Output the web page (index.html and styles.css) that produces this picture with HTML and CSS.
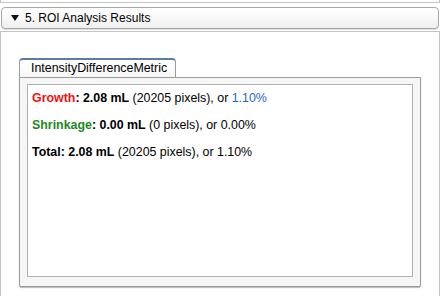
FILE: index.html
```html
<!DOCTYPE html>
<html lang="en">
<head>
    <meta charset="UTF-8">
    <title>ROI Analysis Results</title>
    <link rel="stylesheet" href="styles.css">
</head>
<body>
    <div class="prev-panel"></div>
    <div class="section-header">
        <span class="arrow"></span>
        <span class="section-title">5. ROI Analysis Results</span>
    </div>
    <div class="section-body">
        <div class="tabs">
            <div class="tab active">IntensityDifferenceMetric</div>
        </div>
        <div class="tab-pane">
            <div class="results">
                <p class="row"><span class="growth">Growth</span><b>: 2.08 mL</b> (20205 pixels), or <span class="pct">1.10%</span></p>
                <p class="row"><span class="shrink">Shrinkage</span><b>: 0.00 mL</b> (0 pixels), or 0.00%</p>
                <p class="row"><b>Total: 2.08 mL</b> (20205 pixels), or 1.10%</p>
            </div>
        </div>
    </div>
</body>
</html>
```
FILE: styles.css
```css
body {
    margin: 0;
    background: #fff;
    font-family: "Liberation Sans", Arial, sans-serif;
    font-size: 12.4px;
    color: #000;
    width: 440px;
    height: 296px;
    overflow: hidden;
}

.prev-panel {
    height: 2px;
    border: 1px solid #c4c4c4;
    border-top: none;
}

.section-header {
    margin: 4px 1px 0 1px;
    height: 20px;
    border: 1px solid #a8a8a8;
    border-radius: 4px;
    background: linear-gradient(#ffffff, #f0f0f0);
    display: flex;
    align-items: center;
    box-shadow: 0 1px 0 #ddd;
}

.arrow {
    width: 0;
    height: 0;
    border-left: 4px solid transparent;
    border-right: 4px solid transparent;
    border-top: 6px solid #111;
    margin-left: 9px;
    margin-right: 6px;
}

.section-title {
    font-size: 12px;
}

.section-body {
    margin-top: 2px;
    border: 1px solid #c4c4c4;
    border-bottom: none;
    padding: 26px 18px 0 18px;
    height: 238px;
}

.tabs {
    display: flex;
}

.tab {
    height: 17px;
    padding: 0 0 0 11px;
    border: 1px solid #9a9a9a;
    border-top: 2px solid #5a7da3;
    border-bottom: none;
    border-radius: 4px 4px 0 0;
    background: linear-gradient(#ffffff, #f7f7f7);
    line-height: 17px;
    width: 144px;
}

.tab-pane {
    height: 193px;
    border: 1px solid #9a9a9a;
    border-radius: 0 0 2px 2px;
    background: #f6f6f6;
    padding: 6px 7px 9px 7px;
    box-shadow: 0 1px 1px #bbb;
}

.results {
    height: 100%;
    background: #fff;
    border: 1px solid #b0b0b0;
    box-sizing: border-box;
    padding: 6px 4px;
}

.row {
    margin: 0 0 12px 0;
    line-height: 15px;
}

.growth { color: #f01010; font-weight: bold; }
.shrink { color: #1c8a1c; font-weight: bold; }
.pct { color: #2565c8; }
```
